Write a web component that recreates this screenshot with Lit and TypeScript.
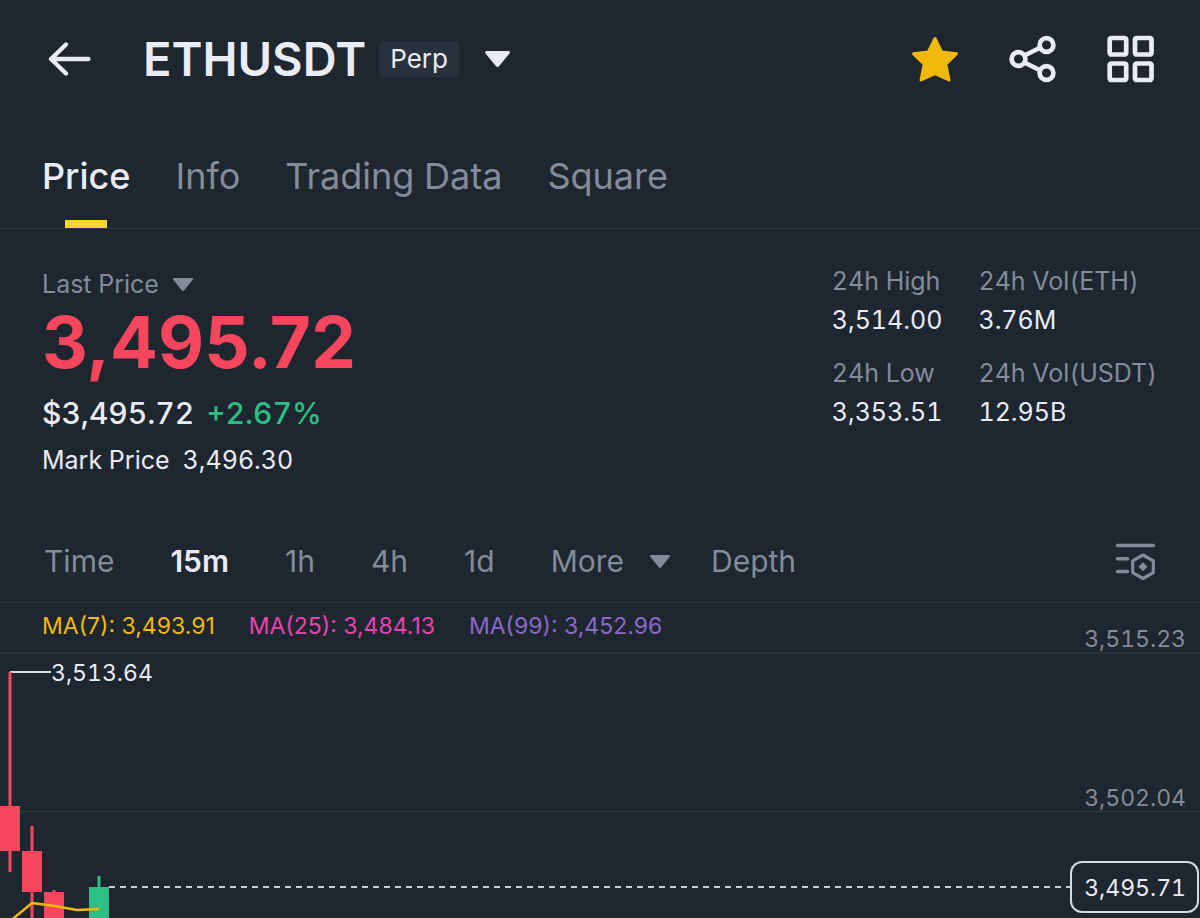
import { LitElement, html, css, svg } from "lit";
import { customElement, property, state } from "lit/decorators.js";
import { classMap } from "lit/directives/class-map.js";

const buttonReset = css`
  button {
    margin: 0;
    padding: 0;
    border: 0;
    background: none;
    color: inherit;
    font: inherit;
    font-variant-numeric: inherit;
    cursor: pointer;
  }
  svg {
    display: block;
    flex: none;
  }
`;

const caret = (width: number, height: number) => html`
  <svg width=${width} height=${height} viewBox="0 0 24 16" preserveAspectRatio="none" aria-hidden="true">
    <path
      d="M1.6 0h20.8c1.4 0 2 1.5 1.1 2.5L13.4 15.2c-.8 1-2 1-2.800 0L.5 2.500C-.4 1.500.2 0 1.600 0z"
      fill="currentColor"
    />
  </svg>
`;

@customElement("symbol-header")
class SymbolHeader extends LitElement {
  @property() symbol = "";
  @property() kind = "";

  static styles = [
    buttonReset,
    css`
      :host {
        display: flex;
        align-items: center;
        justify-content: space-between;
        height: 118px;
        padding: 0 45px 0 48px;
        color: #eaecf5;
      }
      .side {
        display: flex;
        align-items: center;
      }
      .back {
        margin-right: 52px;
      }
      .symbol {
        display: flex;
        align-items: center;
      }
      .name {
        font-size: 47px;
        line-height: 56px;
        font-weight: 600;
      }
      .kind {
        margin: 0 26px 0 13px;
        padding: 0 11px;
        border-radius: 5px;
        background: #29313c;
        font-size: 26px;
        line-height: 36px;
      }
      .actions {
        display: flex;
        align-items: center;
        gap: 50px;
      }
    `,
  ];

  render() {
    return html`
      <div class="side">
        <button class="back" aria-label="Back">
          <svg width="43" height="34" viewBox="0 0 43 34" fill="none" stroke="currentColor" stroke-width="4.300" stroke-linecap="round" stroke-linejoin="round">
            <path d="M18 2.500 3 17l15 14.500M3 17h37.500" />
          </svg>
        </button>
        <button class="symbol">
          <span class="name">${this.symbol}</span>
          <span class="kind">${this.kind}</span>
          ${caret(25, 16)}
        </button>
      </div>
      <div class="actions">
        <button aria-label="Favorite">
          <svg width="48" height="48" viewBox="0 0 48 48">
            <path
              d="M24 3.500l6.600 13.500 15 1.700-10.800 10.600 3.200 15.700L24 38.700 10 45l3.200-15.700L2.400 18.700l15-1.700z"
              fill="#f0b90b" stroke="#f0b90b" stroke-width="3" stroke-linejoin="round"
            />
          </svg>
        </button>
        <button aria-label="Share">
          <svg width="48" height="48" viewBox="0 0 48 48" fill="none" stroke="currentColor" stroke-width="4.700">
            <circle cx="9.500" cy="24" r="6.900" />
            <circle cx="37.500" cy="10" r="6.900" />
            <circle cx="37.500" cy="38" r="6.900" />
            <path d="M15.500 20.500 31.500 12.500M15.500 27.500 31.500 35.500" />
          </svg>
        </button>
        <button aria-label="Layout">
          <svg width="48" height="48" viewBox="0 0 48 48" fill="none" stroke="currentColor" stroke-width="4.700">
            <rect x="2.700" y="3" width="16.500" height="16.500" rx="1.800" />
            <rect x="28" y="3" width="16.500" height="16.500" rx="1.800" />
            <rect x="2.700" y="28.500" width="16.500" height="16.500" rx="1.800" />
            <rect x="28" y="28.500" width="16.500" height="16.500" rx="1.800" />
          </svg>
        </button>
      </div>
    `;
  }
}

@customElement("page-tabs")
class PageTabs extends LitElement {
  @state() private selected = "Price";
  private tabs = ["Price", "Info", "Trading Data", "Square"];

  static styles = [
    buttonReset,
    css`
      :host {
        display: block;
        border-bottom: 1px solid #2f3740;
      }
      .tabs {
        display: flex;
        gap: 45px;
        padding: 0 42px;
      }
      .tab {
        display: flex;
        flex-direction: column;
        align-items: center;
        gap: 22px;
        padding-top: 36px;
        color: #848b99;
        font-size: 36px;
        line-height: 44px;
        white-space: nowrap;
      }
      .tab::after {
        content: "";
        width: 42px;
        height: 8px;
      }
      .tab.selected {
        color: #eaecf5;
        font-weight: 500;
      }
      .tab.selected::after {
        background: #fcd535;
      }
    `,
  ];

  render() {
    return html`
      <div class="tabs" role="tablist">
        ${this.tabs.map(
          (tab) => html`
            <button
              role="tab"
              aria-selected=${tab === this.selected}
              class=${classMap({ tab: true, selected: tab === this.selected })}
              @click=${() => (this.selected = tab)}
            >${tab}</button>
          `
        )}
      </div>
    `;
  }
}

@customElement("price-summary")
class PriceSummary extends LitElement {
  private stats = [
    ["24h High", "3,514.00"],
    ["24h Vol(ETH)", "3.76M"],
    ["24h Low", "3,353.51"],
    ["24h Vol(USDT)", "12.95B"],
  ];

  static styles = [
    buttonReset,
    css`
      :host {
        display: flex;
        justify-content: space-between;
        align-items: flex-start;
        padding: 34px 43px 44px 42px;
        color: #eaecf5;
        font-size: 25px;
        line-height: 36px;
      }
      .price {
        padding-top: 3px;
      }
      .source {
        display: flex;
        align-items: center;
        gap: 14px;
        color: #848b99;
      }
      .last {
        color: #f6465d;
        font-size: 71px;
        line-height: 80px;
        font-weight: 700;
        font-variant-numeric: normal;
      }
      .fiat {
        display: flex;
        gap: 12px;
        margin: 11px 0 9px;
        font-size: 30px;
        line-height: 40px;
        font-weight: 500;
      }
      .change {
        color: #2ebd85;
      }
      .mark {
        display: flex;
        gap: 13px;
      }
      .stats {
        display: grid;
        grid-template-columns: auto auto;
        gap: 17px 36px;
        margin: 0;
      }
      .stat {
        display: flex;
        flex-direction: column;
        gap: 3px;
      }
      .label {
        color: #848b99;
      }
      .value {
        margin: 0;
      }
    `,
  ];

  render() {
    return html`
      <div class="price">
        <button class="source">Last Price ${caret(20, 13)}</button>
        <div class="last">3,495.72</div>
        <div class="fiat"><span>$3,495.72</span><span class="change">+2.67%</span></div>
        <div class="mark"><span>Mark Price</span><span>3,496.30</span></div>
      </div>
      <dl class="stats">
        ${this.stats.map(
          ([label, value]) => html`
            <div class="stat">
              <dt class="label">${label}</dt>
              <dd class="value">${value}</dd>
            </div>
          `
        )}
      </dl>
    `;
  }
}

@customElement("interval-bar")
class IntervalBar extends LitElement {
  @state() private selected = "15m";
  private intervals = ["Time", "15m", "1h", "4h", "1d"];

  static styles = [
    buttonReset,
    css`
      :host {
        display: flex;
        align-items: center;
        justify-content: space-between;
        height: 80px;
        padding: 0 44px;
        border-bottom: 1px solid #2f3740;
        color: #848b99;
        font-size: 30px;
        line-height: 40px;
        font-variant-numeric: normal;
      }
      .intervals {
        display: flex;
        gap: 56px;
        padding-bottom: 2px;
      }
      .selected {
        color: #eaecf5;
        font-weight: 600;
      }
      .more {
        display: flex;
        align-items: center;
        gap: 26px;
      }
      .views {
        display: flex;
        gap: 41px;
      }
    `,
  ];

  render() {
    return html`
      <div class="intervals">
        ${this.intervals.map(
          (name) => html`
            <button
              class=${classMap({ selected: name === this.selected })}
              aria-pressed=${name === this.selected}
              @click=${() => (this.selected = name)}
            >${name}</button>
          `
        )}
        <div class="views">
          <button class="more">More ${caret(20, 13)}</button>
          <button>Depth</button>
        </div>
      </div>
      <button aria-label="Chart settings">
        <svg width="41" height="38" viewBox="0 0 41 38" fill="none" stroke="currentColor" stroke-width="3.500" stroke-linecap="round">
          <path d="M2.500 2.500h36M2.500 15.700h10M2.500 28.500h10" />
          <path d="M28 12l10.300 5.900v11.700L28 35.500l-10.300-5.900V17.900z" stroke-width="3.200" stroke-linejoin="round" />
          <path d="M28 19.200l4.500 4.500-4.500 4.500-4.500-4.500z" fill="currentColor" stroke="none" />
        </svg>
      </button>
    `;
  }
}

interface Candle {
  x: number;
  high: number;
  top: number;
  bottom: number;
  low: number;
  up: boolean;
}

@customElement("candle-chart")
class CandleChart extends LitElement {
  private averages = [
    { text: "MA(7): 3,493.91", tone: "fast" },
    { text: "MA(25): 3,484.13", tone: "mid" },
    { text: "MA(99): 3,452.96", tone: "slow" },
  ];
  private candles: Candle[] = [
    { x: 10, high: 69, top: 203, bottom: 248, low: 269, up: false },
    { x: 32, high: 223, top: 248, bottom: 289, low: 340, up: false },
    { x: 54, high: 287, top: 289, bottom: 340, low: 340, up: false },
    { x: 99, high: 273, top: 284, bottom: 340, low: 340, up: true },
  ];

  static styles = css`
    :host {
      display: block;
      flex: 1;
      position: relative;
      overflow: hidden;
      font-size: 23px;
      line-height: 28px;
      color: #848b99;
    }
    .band {
      display: flex;
      justify-content: space-between;
      align-items: flex-end;
      padding: 0 14px 0 42px;
      border-bottom: 1px solid #2f3740;
    }
    .band.legend {
      height: 49px;
      border-bottom-width: 2px;
      border-color: #2b333d;
    }
    .band.scale {
      height: 157px;
      justify-content: flex-end;
    }
    .level {
      line-height: 26px;
    }
    .averages {
      display: flex;
      gap: 34px;
      padding-bottom: 12px;
      font-variant-numeric: normal;
    }
    .fast {
      color: #f0b90b;
    }
    .mid {
      color: #e843b0;
    }
    .slow {
      color: #8b69c8;
    }
    .plot {
      position: absolute;
      top: 0;
      left: 0;
      width: 100%;
      height: 100%;
    }
    .high {
      position: absolute;
      top: 56px;
      left: 51px;
      color: #eaecf5;
    }
    .current {
      position: absolute;
      top: 258px;
      left: 109px;
      right: 1px;
      display: flex;
      align-items: center;
      color: #eaecf5;
    }
    .dashes {
      flex: 1;
      height: 2px;
      background: repeating-linear-gradient(90deg, #c9ced6 0 6px, transparent 6px 11px);
    }
    .tag {
      padding: 11px 11px 9px 12px;
      border: 2px solid #d5d9e2;
      border-radius: 12px;
    }
  `;

  render() {
    return html`
      <div class="band legend">
        <div class="averages">
          ${this.averages.map((a) => html`<span class=${a.tone}>${a.text}</span>`)}
        </div>
        <span class="level">3,515.23</span>
      </div>
      <div class="band scale"><span class="level">3,502.04</span></div>
      <svg class="plot" role="img" aria-label="15 minute candles">
        <path d="M10 69H51" stroke="#d5d9e2" stroke-width="2" />
        ${this.candles.map((c) => {
          const color = c.up ? "#2ebd85" : "#f6465d";
          return svg`
            <rect x=${c.x - 1.5} y=${c.high} width="3" height=${c.low - c.high} fill=${color} />
            <rect x=${c.x - 10} y=${c.top} width="20" height=${c.bottom - c.top} fill=${color} />
          `;
        })}
        <path d="M9 319 32 300 55 303 77 307 99 306" fill="none" stroke="#f0b90b" stroke-width="2.500" stroke-linejoin="round" />
      </svg>
      <span class="high">3,513.64</span>
      <div class="current">
        <span class="dashes"></span>
        <span class="tag">3,495.71</span>
      </div>
    `;
  }
}

@customElement("app-root")
class AppRoot extends LitElement {
  static styles = css`
    :host {
      display: flex;
      flex-direction: column;
      height: 100vh;
      background: #1e262f;
      font-family: Inter, "Liberation Sans", sans-serif;
      font-variant-numeric: tabular-nums;
    }
  `;

  render() {
    return html`
      <symbol-header symbol="ETHUSDT" kind="Perp"></symbol-header>
      <page-tabs></page-tabs>
      <price-summary></price-summary>
      <interval-bar></interval-bar>
      <candle-chart></candle-chart>
    `;
  }
}
